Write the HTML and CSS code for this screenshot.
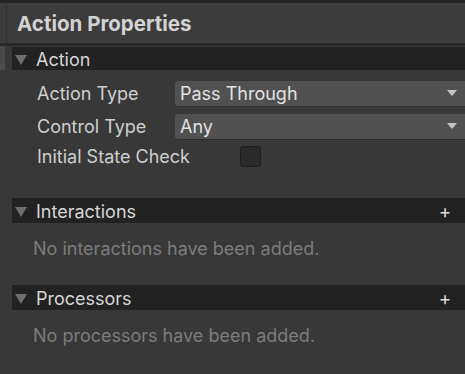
FILE: index.html
```html
<!DOCTYPE html>
<html>
<head>
    <title>Action Properties</title>
    <link rel="stylesheet" href="styles.css">
</head>
<body>
    <div class="panel">
        <div class="title-bar">
            <div class="title-edge"></div>
            <h1>Action Properties</h1>
        </div>
        <div class="section">
            <div class="fold-row">
                <div class="fold-mark"></div>
                <div class="fold-head">
                    <span class="tri"></span>
                    <span class="fold-name">Action</span>
                </div>
            </div>
            <div class="props">
                <div class="prop">
                    <label>Action Type</label>
                    <div class="dropdown"><span>Pass Through</span><span class="arrow"></span></div>
                </div>
                <div class="prop">
                    <label>Control Type</label>
                    <div class="dropdown"><span>Any</span><span class="arrow"></span></div>
                </div>
                <div class="prop check-row">
                    <label>Initial State Check</label>
                    <div class="checkbox"></div>
                </div>
            </div>
        </div>
        <div class="section list-section">
            <div class="fold-row">
                <div class="fold-head">
                    <span class="tri"></span>
                    <span class="fold-name">Interactions</span>
                    <span class="plus">+</span>
                </div>
            </div>
            <p class="empty">No interactions have been added.</p>
        </div>
        <div class="section list-section">
            <div class="fold-row">
                <div class="fold-head">
                    <span class="tri"></span>
                    <span class="fold-name">Processors</span>
                    <span class="plus">+</span>
                </div>
            </div>
            <p class="empty">No processors have been added.</p>
        </div>
    </div>
</body>
</html>
```
FILE: styles.css
```css
body {
    margin: 0;
    background-color: #383838;
    font-family: Inter, "Noto Sans", sans-serif;
    color: #d2d2d2;
    overflow: hidden;
}
.panel {
    width: 465px;
    height: 374px;
    border-top: 3px solid #232323;
    box-sizing: border-box;
}
.title-bar {
    display: flex;
    height: 40px;
    background-color: #3c3c3c;
    border-bottom: 3px solid #2a2a2a;
}
.title-edge {
    width: 6px;
    border-right: 1px solid #303030;
}
.title-bar h1 {
    margin: 0;
    padding-left: 10px;
    font-size: 20.5px;
    font-weight: 700;
    line-height: 42px;
    color: #d2d2d2;
}
.fold-row {
    display: flex;
}
.fold-mark {
    width: 5px;
    background-color: #4a4a4a;
}
.fold-head {
    flex: 1;
    display: flex;
    align-items: center;
    height: 25px;
    padding-top: 2px;
    margin-left: 12px;
    box-sizing: border-box;
    background-color: #222222;
    font-size: 18px;
}
.fold-mark + .fold-head {
    height: 23px;
    margin-top: 1px;
    margin-left: 7px;
}
.tri {
    width: 0;
    height: 0;
    margin-left: 3px;
    margin-right: 9px;
    border-left: 6px solid transparent;
    border-right: 6px solid transparent;
    border-top: 10px solid #6e6e6e;
}
.fold-name {
    flex: 1;
    color: #d6d6d6;
}
.plus {
    width: 14px;
    margin-right: 13px;
    font-size: 19px;
    color: #d8d8d8;
    text-align: center;
}
.props {
    padding: 10px 0 0 37px;
}
.prop {
    display: flex;
    align-items: center;
    height: 27px;
    margin-bottom: 6px;
    font-size: 18px;
}
.prop label {
    width: 138px;
    color: #cfcfcf;
}
.dropdown {
    flex: 1;
    display: flex;
    align-items: center;
    height: 26px;
    padding-left: 5px;
    background-color: #515151;
    border-radius: 3px 0 0 3px;
    border-bottom: 1px solid #2c2c2c;
    box-sizing: border-box;
    color: #e2e2e2;
    font-size: 18px;
}
.dropdown span:first-child {
    flex: 1;
}
.arrow {
    width: 0;
    height: 0;
    margin-right: 8px;
    border-left: 5px solid transparent;
    border-right: 5px solid transparent;
    border-top: 6px solid #c4c4c4;
}
.check-row {
    height: 21px;
}
.check-row label {
    width: 203px;
}
.checkbox {
    width: 19px;
    height: 19px;
    background-color: #2a2a2a;
    border: 1px solid #1e1e1e;
    border-radius: 3px;
}
.list-section {
    margin-top: 31px;
}
.list-section + .list-section {
    margin-top: 26px;
}
.empty {
    margin: 0;
    padding: 15px 0 0 33px;
    font-size: 18px;
    color: #7c7c7c;
}
```
